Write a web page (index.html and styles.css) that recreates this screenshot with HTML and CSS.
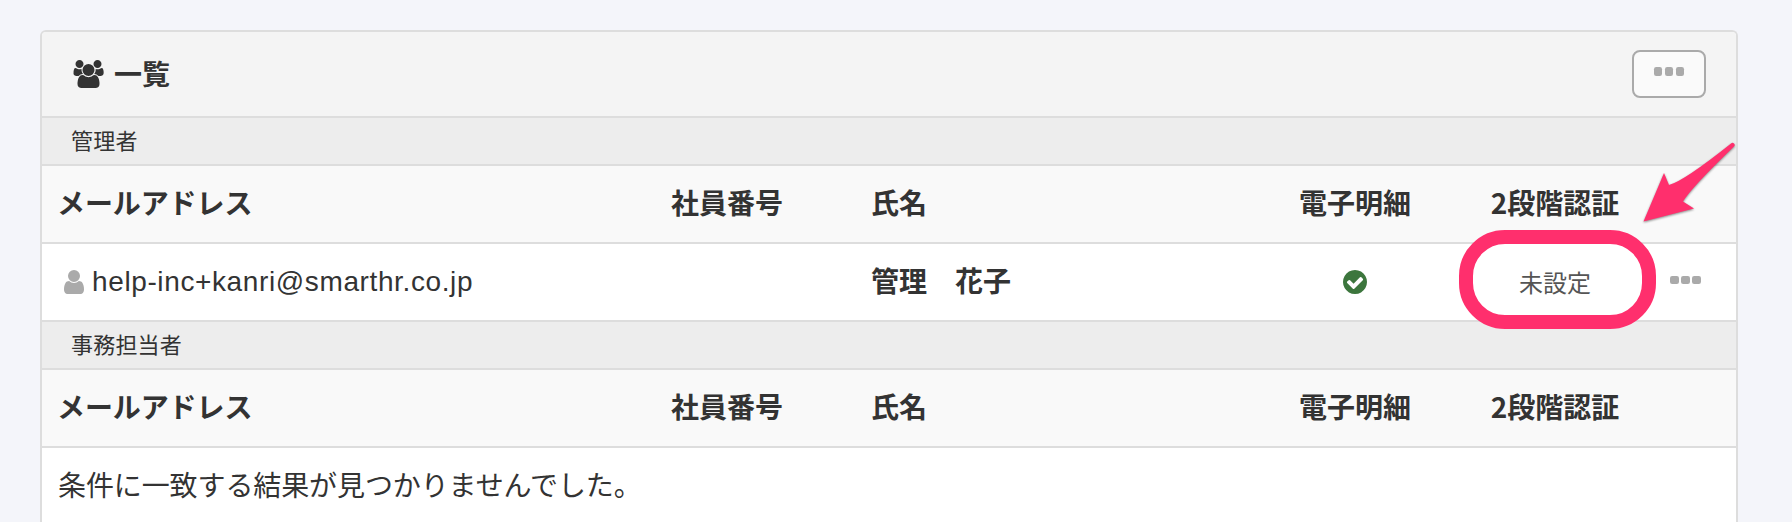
FILE: index.html
```html
<!DOCTYPE html>
<html lang="ja">
<head>
<meta charset="utf-8">
<title>一覧</title>
<link rel="stylesheet" href="styles.css">
</head>
<body>
<main class="panel">
  <header class="panel-header">
    <h1 class="title">
      <svg class="icon-users" viewBox="0 0 1920 1792"><path d="M593 896q-162 5-265 128h-134q-82 0-138-40.5t-56-118.5q0-353 124-353 6 0 43.5 21t97.5 42.5 119 21.5q67 0 133-23-5 37-5 66 0 159 93 256zm1071 637q0 120-73 189.5t-194 69.5h-874q-121 0-194-69.5t-73-189.5q0-53 3.5-103.5t14-109 26.5-108.5 43-97.5 62-81 85.5-53.5 111.5-20q10 0 43 21.5t73 48 107 48 135 21.5 135-21.5 107-48 73-48 43-21.5q61 0 111.5 20t85.5 53.5 62 81 43 97.5 26.5 108.5 14 109 3.5 103.5zm-1024-1277q0 106-75 181t-181 75-181-75-75-181 75-181 181-75 181 75 75 181zm704 384q0 159-112.5 271.5t-271.5 112.5-271.5-112.5-112.5-271.5 112.5-271.5 271.5-112.5 271.5 112.5 112.5 271.5zm576 225q0 78-56 118.5t-138 40.5h-134q-103-123-265-128 93-97 93-256 0-29-5-66 66 23 133 23 59 0 119-21.5t97.5-42.5 43.5-21q124 0 124 353zm-128-609q0 106-75 181t-181 75-181-75-75-181 75-181 181-75 181 75 75 181z"/></svg>
      <span class="title-text">一覧</span>
    </h1>
    <button class="menu-button" aria-label="メニュー"><span class="dots"><i></i><i></i><i></i></span></button>
  </header>

  <h2 class="section">管理者</h2>
  <div class="row head">
    <span class="mail-head">メールアドレス</span><span>社員番号</span><span>氏名</span><span class="center">電子明細</span><span class="center">2段階認証</span>
  </div>
  <div class="row">
    <span class="mail"><svg class="icon-user" viewBox="0 0 1280 1536"><path d="M1280 1271q0 109-62.5 187t-150.5 78h-854q-88 0-150.5-78t-62.5-187q0-85 8.5-160.5t31.5-152 58.5-131 94-89 134.5-34.5q131 128 313 128t313-128q76 0 134.5 34.5t94 89 58.5 131 31.5 152 8.5 160.5zm-256-887q0 159-112.5 271.5t-271.5 112.5-271.5-112.5-112.5-271.5 112.5-271.5 271.5-112.5 271.5 112.5 112.5 271.5z"/></svg><span class="address">help-inc+kanri@smarthr.co.jp</span></span>
    <span></span>
    <span class="name">管理　花子</span>
    <span class="center"><svg class="icon-check" viewBox="0 0 1536 1536"><path d="M1284 606q0-28-18-46l-91-90q-19-19-45-19t-45 19l-408 407-226-226q-19-19-45-19t-45 19l-91 90q-18 18-18 46 0 27 18 45l362 362q19 19 45 19 27 0 46-19l543-543q18-18 18-45zm252 162q0 209-103 385.5t-279.5 279.5-385.5 103-385.5-103-279.5-279.5-103-385.5 103-385.5 279.5-279.5 385.5-103 385.5 103 279.5 279.5 103 385.5z"/></svg></span>
    <span class="center status">未設定<span class="ring"></span>
      <svg class="arrow" viewBox="0 0 100 90"><path d="M3.500 51.500 24 3 29 15Q44 11 91 -26.500A2 2 0 0 1 94 -23.500Q51 18 43 31.500L54 38.500Z" transform="translate(0 30)"/></svg>
    </span>
    <span class="center row-menu"><span class="dots"><i></i><i></i><i></i></span></span>
  </div>

  <h2 class="section">事務担当者</h2>
  <div class="row head">
    <span class="mail-head">メールアドレス</span><span>社員番号</span><span>氏名</span><span class="center">電子明細</span><span class="center">2段階認証</span>
  </div>
  <div class="row empty">条件に一致する結果が見つかりませんでした。</div>
</main>
</body>
</html>
```
FILE: styles.css
```css
* { box-sizing: border-box; }

body {
  margin: 0;
  height: 522px;
  padding: 30px 54px 0 40px;
  overflow: hidden;
  background: #f4f5fa;
  color: #333;
  font: 28px/40px "Noto Sans CJK JP", sans-serif;
}

.panel {
  height: 492px;
  overflow: hidden;
  border: 2px solid #ddd;
  border-bottom: 0;
  border-radius: 6px 6px 0 0;
  background: #fff;
}

.panel-header {
  display: flex;
  align-items: center;
  justify-content: space-between;
  height: 86px;
  padding: 0 30px 0 31px;
  border-bottom: 2px solid #ddd;
  background: #f4f4f4;
}

.title {
  display: flex;
  align-items: center;
  gap: 10px;
  margin: 0;
  font-size: 28px;
  line-height: 40px;
}

.title-text { padding-bottom: 3px; }
.icon-users { width: 31px; height: 28px; fill: #333; }

.menu-button {
  display: flex;
  justify-content: center;
  width: 74px;
  height: 48px;
  padding: 15px 0 0;
  border: 2px solid #aaa;
  border-radius: 8px;
  background: #fafafa;
}

.dots { display: flex; gap: 2.3px; }
.dots i { width: 8.5px; height: 8.5px; border-radius: 2.2px; background: #aaa; }

.section {
  height: 48px;
  margin: 0;
  padding: 0 29px;
  border-bottom: 2px solid #ddd;
  background: #ededed;
  font-size: 22px;
  font-weight: 400;
  line-height: 43px;
  letter-spacing: .2px;
}

.row {
  display: grid;
  grid-template-columns: 613px 200px 384px 200px 200px 61px;
  align-items: center;
  height: 78px;
  padding: 0 16px;
  border-bottom: 2px solid #ddd;
}

.head { padding-bottom: 4px; background: #f9f9f9; font-weight: 700; }
.mail-head { margin-left: -1px; letter-spacing: -.1px; }
.name { padding-bottom: 4px; font-weight: 700; }
.center { display: flex; justify-content: center; }
.row-menu { padding-bottom: 4px; }

.mail { display: flex; align-items: center; gap: 8px; padding-left: 6px; }
.address {
  font-family: "Liberation Sans", sans-serif;
  letter-spacing: .62px;
  white-space: nowrap;
}
.icon-user { width: 20px; height: 24px; fill: #aaa; }
.icon-check { width: 24px; height: 24px; fill: #3c763d; }

.status { position: relative; color: #555; font-size: 24px; }

/* Callout drawn over the table */
.ring {
  position: absolute;
  left: 4px;
  top: -32px;
  width: 197px;
  height: 99px;
  border: 14px solid #ff2f6d;
  border-radius: 46px;
}

.arrow {
  position: absolute;
  left: 185px;
  top: -122px;
  width: 100px;
  height: 90px;
  fill: #ff2f6d;
  filter: drop-shadow(0 1px 1px rgba(0, 0, 0, .45));
}

.empty { display: block; padding-top: 16px; letter-spacing: -.1px; }
```
